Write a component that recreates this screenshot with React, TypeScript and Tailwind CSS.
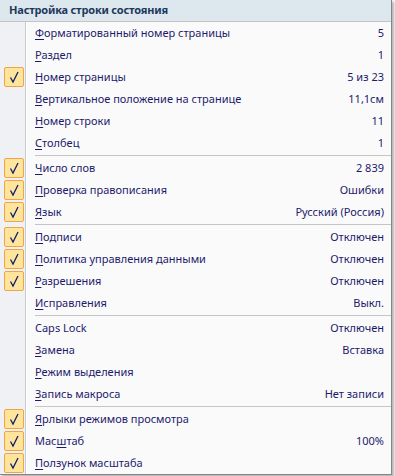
import React from "react";

interface MenuItem {
  label: string;
  key: number; // index of the underlined letter
  value?: string;
  checked?: boolean;
}

const groups: MenuItem[][] = [
  [
    { label: "Форматированный номер страницы", key: 0, value: "5" },
    { label: "Раздел", key: 0, value: "1" },
    { label: "Номер страницы", key: 0, value: "5 из 23", checked: true },
    { label: "Вертикальное положение на странице", key: 0, value: "11,1см" },
    { label: "Номер строки", key: 0, value: "11" },
    { label: "Столбец", key: 0, value: "1" },
  ],
  [
    { label: "Число слов", key: 0, value: "2 839", checked: true },
    { label: "Проверка правописания", key: 0, value: "Ошибки", checked: true },
    { label: "Язык", key: 0, value: "Русский (Россия)", checked: true },
  ],
  [
    { label: "Подписи", key: 0, value: "Отключен", checked: true },
    { label: "Политика управления данными", key: 0, value: "Отключен", checked: true },
    { label: "Разрешения", key: 0, value: "Отключен", checked: true },
    { label: "Исправления", key: 0, value: "Выкл." },
  ],
  [
    { label: "Caps Lock", key: -1, value: "Отключен" },
    { label: "Замена", key: 0, value: "Вставка" },
    { label: "Режим выделения", key: 0 },
    { label: "Запись макроса", key: 0, value: "Нет записи" },
  ],
  [
    { label: "Ярлыки режимов просмотра", key: 0, checked: true },
    { label: "Масштаб", key: 3, value: "100%", checked: true },
    { label: "Ползунок масштаба", key: 0, checked: true },
  ],
];

const Check = () => (
  <div className="w-[20px] h-[20px] rounded-[2px] border border-[#f1a447] bg-[#ffe49c] flex items-center justify-center">
    <svg width="14" height="14" viewBox="0 0 14 14" fill="none">
      <path d="M3.5 7.5 L6 12 L11 2" stroke="#101e6e" strokeWidth="1.3" />
    </svg>
  </div>
);

const Label = ({ text, k }: { text: string; k: number }) => {
  if (k < 0) return <span>{text}</span>;
  return (
    <span>
      {text.slice(0, k)}
      <span className="underline underline-offset-[2px]">{text[k]}</span>
      {text.slice(k + 1)}
    </span>
  );
};

const Row = ({ item }: { item: MenuItem }) => (
  <div className="h-[22px] flex items-center">
    <div className="w-[27px] flex items-center pl-[4px]">{item.checked && <Check />}</div>
    <div className="flex-1 flex items-center justify-between pl-[8px] pr-[7px] text-[#1d1a6c]">
      <Label text={item.label} k={item.key} />
      {item.value && <span>{item.value}</span>}
    </div>
  </div>
);

export default function App() {
  return (
    <div className="w-[395px] h-[476px] bg-[#f4f4f4] relative" style={{ fontFamily: '"Noto Sans", "Open Sans", sans-serif' }}>
      <div className="w-[392px] border border-[#868686] border-t-0 border-l-0 bg-[#fafafa] text-[11px] shadow-[2px_2px_2px_rgba(0,0,0,0.25)]">
        <div className="h-[22px] bg-[#dde7ee] border-b border-[#c5c5c5] flex items-center pl-[9px] font-bold text-[#1e395b] tracking-[-0.2px]">
          Настройка строки состояния
        </div>
        <div className="bg-[linear-gradient(to_right,#eff1f4_25px,#c8ccd0_25px,#c8ccd0_26px,#ffffff_26px,#ffffff_27px,#fafafa_27px)]">
          {groups.map((g, gi) => (
            <div key={gi}>
              {gi > 0 && (
                <div className="h-[3px] flex items-center pl-[35px]">
                  <div className="h-[1px] w-full bg-[#c5c5c5]" />
                </div>
              )}
              {g.map((item) => (
                <Row key={item.label} item={item} />
              ))}
            </div>
          ))}
        </div>
      </div>
    </div>
  );
}
